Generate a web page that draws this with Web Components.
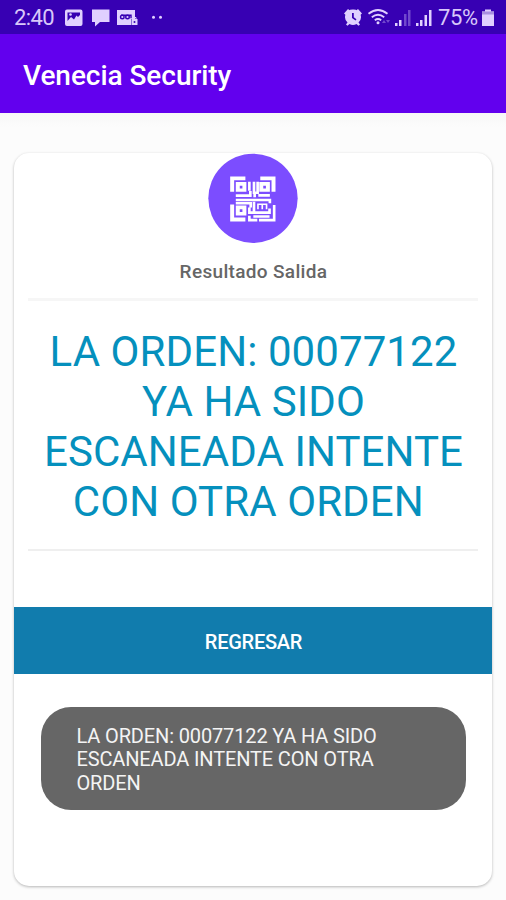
<!DOCTYPE html>
<html lang="es">
<head>
<meta charset="utf-8">
<title>Venecia Security</title>
<style>
html, body { margin: 0; height: 900px; background: #fcfcfc; overflow: hidden; }
body { font-family: Roboto, "Liberation Sans", sans-serif; }
</style>
</head>
<body>
<venecia-app></venecia-app>
<script>
const define = (name, html) => {
  const t = document.createElement('template');
  t.innerHTML = html;
  customElements.define(name, class extends HTMLElement {
    constructor() {
      super();
      this.attachShadow({ mode: 'open' }).append(t.content.cloneNode(true));
    }
  });
};

define('status-bar', `
<style>
:host { display: flex; justify-content: space-between; align-items: flex-start; height: 34px; background: #3700b3; color: #d8c8fa; font-size: 22px; line-height: 36px; box-sizing: border-box; padding: 0 10px 0 14px; }
svg { display: block; }
.side { display: flex; }
.time { width: 50px; letter-spacing: -0.6px; }
.pct { letter-spacing: -0.4px; width: 42px; }
</style>
<div class="side"><span class="time">2:40</span>
<svg width="106" height="34" viewBox="64 0 106 34" fill="#e0d0ff">
<path fill-rule="evenodd" d="M67 9.500h13.500q2 0 2 2v12.500q0 2-2 2H67q-2 0-2-2V11.500q0-2 2-2zm0.500 3v8.500l3.500-4 3 2.500 2.500-4 1.500 1.500 2-2v-2.500z"/><circle cx="70.500" cy="14.500" r="1.300"/>
<path d="M92 9.500h17.500V22H100l-5 4.500V22h-3z"/>
<path d="M117 10h18v9h-4v6h-14z"/>
<g fill="none" stroke="#3700b3" stroke-width="1.400"><circle cx="122.300" cy="17" r="1.800"/><circle cx="127.500" cy="17" r="1.800"/><path d="M121 15.200h10v3"/></g>
<path d="M131.500 19h6v6h-6z"/><path d="M133 19v-1.500h3V19" fill="none" stroke="#e0d0ff"/><circle cx="134.500" cy="22" r="1" fill="#3700b3"/>
<circle cx="153.500" cy="17.300" r="1.500"/><circle cx="160.500" cy="17.300" r="1.500"/>
</svg></div>
<div class="side">
<svg width="94" height="34" viewBox="344 0 94 34" fill="#e0d0ff">
<path fill-rule="evenodd" d="M353 9.500a7.500 7.500 0 0 1 5.500 13l1.500 2-1.500 1.200-2-1.700a7.500 7.500 0 0 1-7 0l-2 1.700-1.500-1.200 1.500-2a7.500 7.500 0 0 1 5.500-13zm-1 3.500v5l3.500 2.500 1-1.300-2.700-1.900V13z"/>
<path d="M344 13.500l4-4.500 1.800 1.500-4 4.500zM362 13.500l-4-4.500-1.800 1.500 4 4.500z"/>
<g fill="none" stroke="#e0d0ff" stroke-width="1.800"><path d="M368.500 13.800q9.500-7.500 19 0M371.800 17.200q6.200-5 12.400 0M374.800 20.300q3.200-2.500 6.400 0"/></g>
<circle cx="378" cy="22.800" r="1.500"/>
<path opacity=".35" d="M382 23l2-3 2 3zM386 20h4l-2 3zM404 14h2.500v12H404zM408 10h2.500v16H408z"/>
<path d="M395 23h2.500v3H395zM399 20h2.500v6H399zM416 23h2.500v3H416zM420 20h2.500v6H420zM424.500 15h2.500v11h-2.500zM429 10h2.500v16H429z"/>
</svg><span class="pct">75%</span>
<svg width="16" height="34" viewBox="480 0 16 34" fill="#e0d0ff"><path d="M485 9.500h6v2h3V26h-12V11.500h3z"/><path fill="#a990e0" d="M482 11.500h12v3h-12z"/></svg>
</div>`);

define('app-header', `
<style>
:host { display: flex; align-items: center; height: 79px; background: #6200ee; color: #fff; padding: 3px 23px 0; box-sizing: border-box; font-size: 28px; font-weight: 500; letter-spacing: -.05px; line-height: 33px; }
</style><slot></slot>`);

define('qr-badge', `
<style>
:host { display: block; width: 90px; height: 90px; }
svg { display: block; }
</style>
<svg width="90" height="90" viewBox="26 23 272 272"><circle cx="162" cy="160" r="135" fill="#7c4dff"/>
<g fill="#fff">
<path d="M93 94h46v11h-34v35H93zM184 94h46v46h-12v-35h-34zM93 179h12v39h34v12H93z"/>
<path fill-rule="evenodd" d="M110 111h32v29h-32zm12 11v8h8v-8zM181 111h32v29h-32zm12 11v8h8v-8zM110 182h32v30h-32zm12 11v8h8v-8z"/>
</g>
<g fill="none" stroke="#fff" stroke-width="8">
<path d="M151 110v27M110 152h44v-14M165 110v33h11v-33M167 140v17M178 151h35M110 165h103V175"/>
<path d="M110 175h45v13M151 188v15h61v-12M165 170v32M151 213v13h24M163 215h49M180 226h46v-46"/>
</g>
<path d="M177 193v-15h26v15M190 178v15" fill="none" stroke="#fff" stroke-width="5"/></svg>`);

define('result-card', `
<style>
:host { display: flex; flex-direction: column; align-items: center; width: 478px; height: 733px; background: #fff; border-radius: 15px; box-shadow: 0 1px 3px rgba(0,0,0,.28); }
.label { font-size: 19px; line-height: 24px; font-weight: 500; color: #666; letter-spacing: .33px; padding-left: 1px; margin-top: 17px; }
.rule { width: 450px; background: #f6f6f6; height: 3px; margin-top: 14px; }
.rule.thin { height: 2px; background: #efefef; margin-top: 22px; }
.message { margin-top: 26px; font-size: 42px; line-height: 50px; letter-spacing: .08px; color: #0590bd; text-align: center; white-space: nowrap; padding-left: 1px; }
</style>
<qr-badge></qr-badge>
<div class="label"><slot name="label"></slot></div>
<div class="rule"></div>
<div class="message"><slot name="message"></slot></div>
<div class="rule thin"></div>
<slot></slot>`);

define('action-button', `
<style>
:host { display: flex; align-items: center; justify-content: center; width: 100%; height: 67px; margin-top: 56px; background: #117cad; color: #fff; font-size: 20px; line-height: 24px; letter-spacing: -.25px; font-weight: 500; padding: 2px 0 0 1px; box-sizing: border-box; }
</style><slot></slot>`);

define('toast-message', `
<style>
:host { display: block; position: absolute; left: 41px; top: 707px; width: 425px; height: 103px; box-sizing: border-box; border-radius: 30px; background: #666; color: #f4f4f4; padding: 18px 35.500px; font-size: 20px; line-height: 23.300px; letter-spacing: -.14px; white-space: nowrap; }
</style><slot></slot>`);

define('venecia-app', `
<style>
:host { display: block; position: relative; width: 506px; height: 900px; background: linear-gradient(#f7f7f7, #fcfcfc) 0 113px / 100% 14px no-repeat, #fcfcfc; }
main { padding: 40px 14px 14px; }
</style>
<status-bar></status-bar>
<app-header>Venecia Security</app-header>
<main><result-card>
<span slot="label">Resultado Salida</span>
<span slot="message">LA ORDEN: 00077122<br>YA HA SIDO<br>ESCANEADA INTENTE<br>CON OTRA ORDEN&nbsp;</span>
<action-button>REGRESAR</action-button>
</result-card></main>
<toast-message>LA ORDEN: 00077122 YA HA SIDO<br>ESCANEADA INTENTE CON OTRA<br>ORDEN</toast-message>`);
</script>
</body>
</html>
